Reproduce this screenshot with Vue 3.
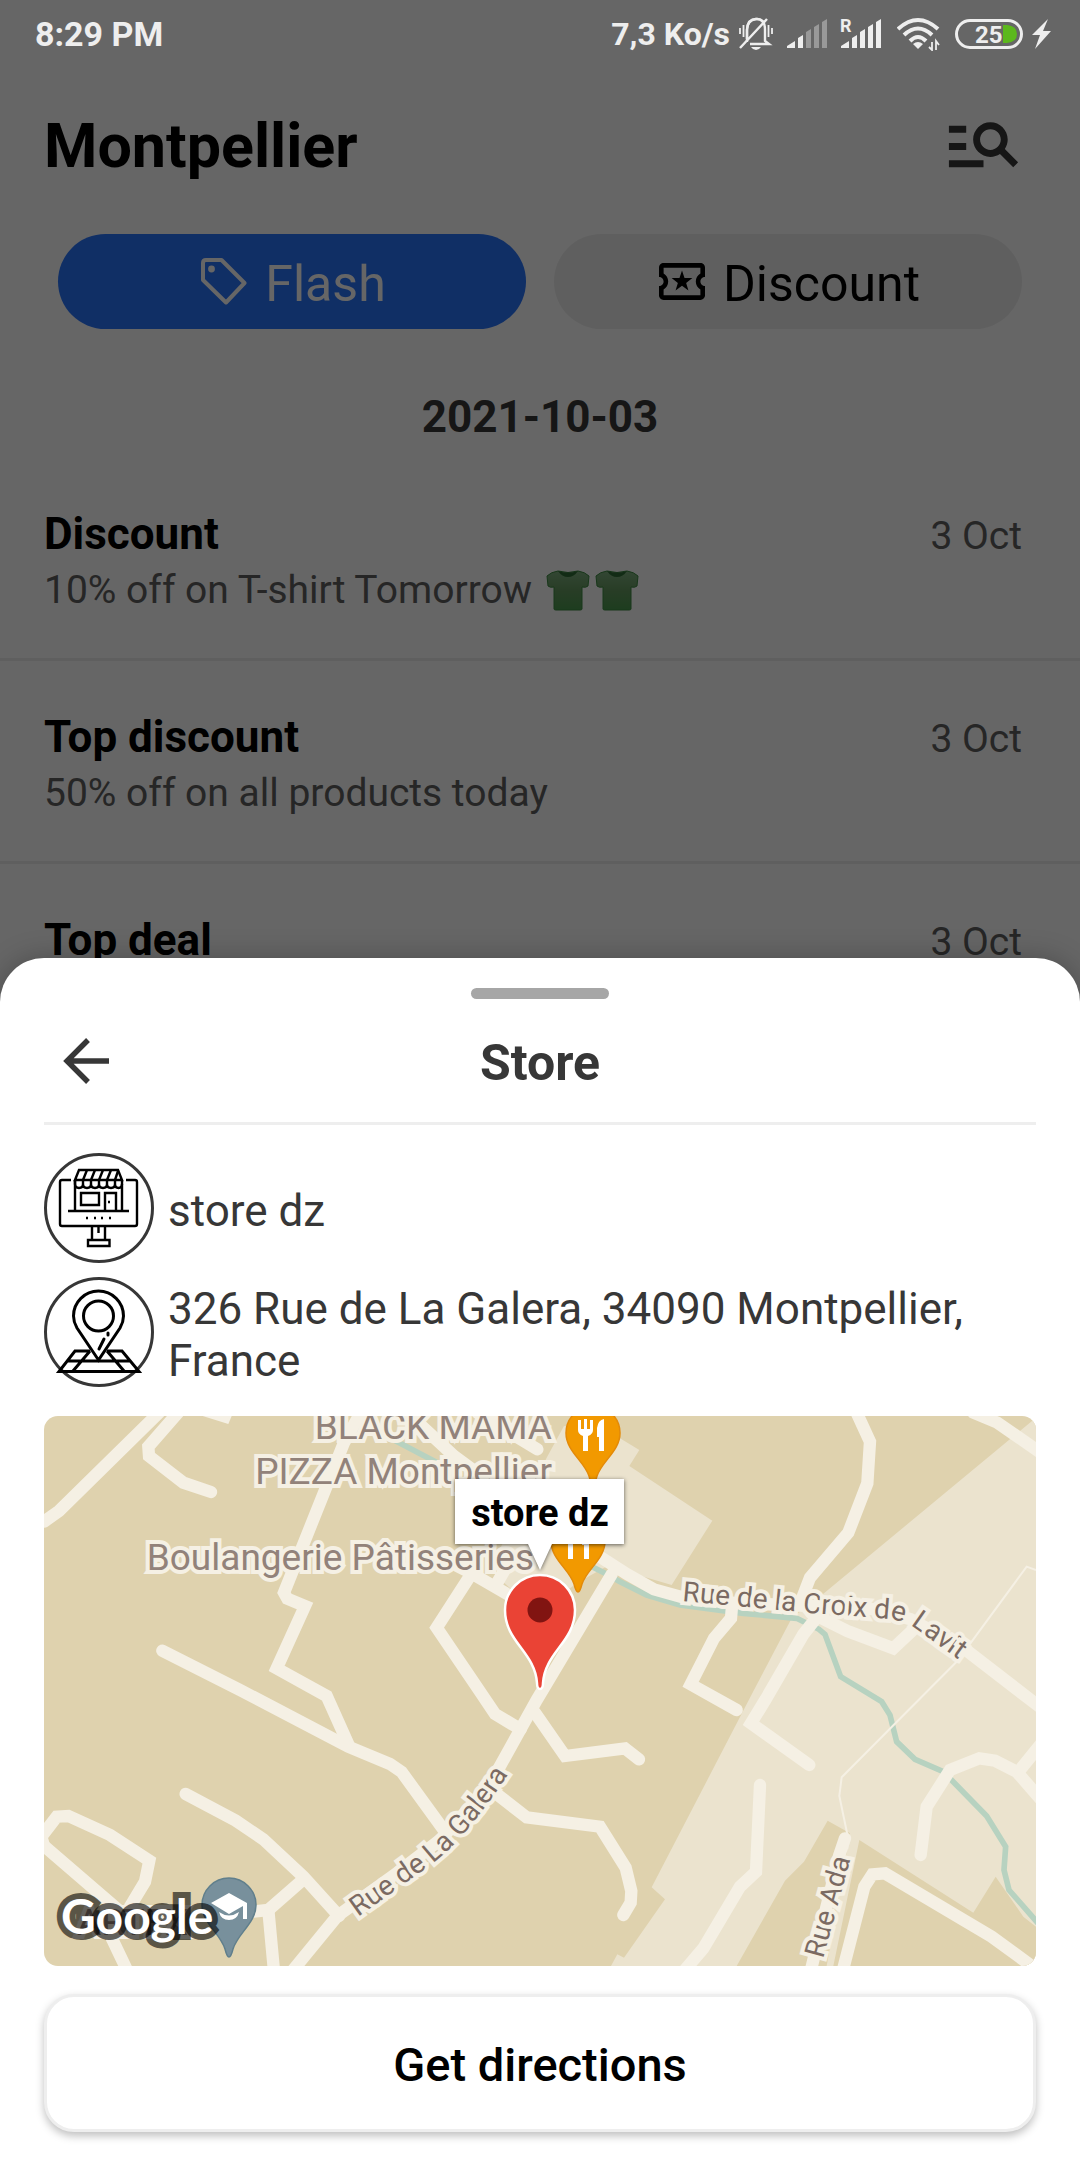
<script setup>
const offers = [
  { title: 'Discount', text: '10% off on T-shirt Tomorrow', shirts: 2, date: '3 Oct' },
  { title: 'Top discount', text: '50% off on all products today', shirts: 0, date: '3 Oct' },
  { title: 'Top deal', text: '', shirts: 0, date: '3 Oct' },
]

// Map geometry is stored at three units per pixel
const roads = [
  '0,317 45,285 345,-10',
  '415,-25 313,92 315,120 418,200 501,228',
  '950,-10 900,80 720,530 730,548 783,570 698,757 848,840 913,985',
  '355,704 588,822 913,992 1038,1044 1073,1068 1205,1250',
  '1703,475 1478,852 1360,1065 1290,1160 1190,1270 1060,1370 880,1500 745,1665',
  '1283,472 1178,635 1310,830 1353,894 1430,940',
  '1240,450 1283,472 1420,552',
  '1360,500 1400,430',
  '1473,890 1563,1020 1743,997 1785,1030',
  '1340,1120 1448,1204 1668,1232 1745,1355 1762,1425 1760,1460 1738,1497',
  '425,1134 575,1214 658,1270 778,1382 885,1500',
  '778,1390 673,1482 600,1490',
  '673,1482 690,1665',
  '-5,1285 215,1475 205,1570 255,1675',
  '0,1290 -8,1262 38,1202 73,1200 198,1257 316,1334 303,1397 258,1472',
  '2438,-10 2478,77 2470,202 2413,350 2298,485 2275,545',
  '2300,590 2410,645 2548,697 2625,625',
  '2320,602 2278,655 2165,850 2121,922 2296,1047',
  '2065,560 2061,607 2010,667 1940,805 2078,882',
  '2788,-10 2860,20 2990,110',
  '2148,1107 2136,1367 2088,1412 1978,1597 1920,1665',
  '2630,1317 2648,1172 2718,1062 2806,1027 2853,1034 2918,1067 2990,1150',
  '2928,1062 2990,985',
  '2396,1665 2461,1412 2485,1375 2523,1372 2843,1562 2970,1655',
  '2403,1267 2385,1320 2300,1665',
  '1090,-10 1230,120 1420,260 1680,430 1750,475 1830,520 1920,545 2060,560 2300,570 2500,580 2600,610 2770,705 2990,875',
  '1300,-10 1480,100',
]
</script>

<template>
  <div class="screen">
    <div class="page">
      <header class="top">
        <h1>Montpellier</h1>
        <button class="icon-button" aria-label="Search">
          <svg width="83" height="83" viewBox="0 0 24 24" fill="#373737">
            <path d="M7 8H2V6h5v2zm0 3H2v2h5v-2zm13.590 7l-3.830-3.830c-.8.52-1.740.83-2.760.83-2.760 0-5-2.240-5-5s2.240-5 5-5 5 2.240 5 5c0 1.020-.31 1.960-.83 2.750L22 16.590 20.590 18zM17 10c0-1.650-1.350-3-3-3s-3 1.350-3 3 1.350 3 3 3 3-1.350 3-3zM2 18h10v-2H2v2z" />
          </svg>
        </button>
      </header>

      <div class="tabs">
        <button class="tab active">
          <svg width="46" height="47" viewBox="0 0 46 47">
            <path d="M5 2H20.500L43.500 25 25 44.500 2 22V5Q2 2 5 2z" fill="none" stroke="currentColor" stroke-width="4" stroke-linejoin="round" />
            <circle cx="10.500" cy="11" r="3.400" fill="currentColor" />
          </svg>
          <span>Flash</span>
        </button>
        <button class="tab">
          <svg width="46" height="37" viewBox="2 4 20 16" fill="currentColor">
            <path d="M22 10V6c0-1.110-.9-2-2-2H4c-1.100 0-1.990.89-1.990 2v4c1.100 0 1.990.9 1.990 2s-.89 2-2 2v4c0 1.100.9 2 2 2h16c1.100 0 2-.9 2-2v-4c-1.100 0-2-.9-2-2s.9-2 2-2zm-2-1.460c-1.190.69-2 1.990-2 3.460s.81 2.770 2 3.460V18H4v-2.540c1.190-.69 2-1.990 2-3.460 0-1.480-.8-2.770-1.990-3.460L4 6h16v2.540z" />
            <path d="M12 7.200l1.100 3.300h3.400l-2.700 2.100 1 3.300-2.800-2-2.800 2 1-3.300-2.700-2.100h3.400z" />
          </svg>
          <span>Discount</span>
        </button>
      </div>

      <h2 class="day">2021-10-03</h2>

      <ul class="offers">
        <li v-for="offer in offers" :key="offer.title">
          <div class="offer-head">
            <h3>{{ offer.title }}</h3>
            <time>{{ offer.date }}</time>
          </div>
          <p>
            <span>{{ offer.text }}</span>
            <span v-if="offer.shirts" class="shirts">
              <svg v-for="n in offer.shirts" :key="n" width="44" height="41" viewBox="0 0 44 41" role="img" aria-label="T-shirt">
                <defs>
                  <linearGradient :id="'shirt' + n" x1="0" y1="0" x2="0" y2="1">
                    <stop offset="0" stop-color="#7fb080" />
                    <stop offset="0.500" stop-color="#64995f" />
                    <stop offset="1" stop-color="#4a9a4e" />
                  </linearGradient>
                </defs>
                <path d="M12 1Q5 2 1 6L2 16Q4 18 8 17V39Q8 40 10 40H34Q36 40 36 39V17Q40 18 42 16L43 6Q39 2 32 1Q22 4 12 1z" :fill="`url(#shirt${n})`" stroke="#3d8a42" />
                <path d="M12 1Q22 4 32 1Q28 7 22 7T12 1z" fill="#2f6d35" />
              </svg>
            </span>
          </p>
        </li>
      </ul>
    </div>

    <div class="scrim"></div>

    <div class="status">
      <span>8:29 PM</span>
      <div class="status-icons">
        <div class="pair">
          <span class="speed">7,3 Ko/s</span>
          <svg width="34" height="34" viewBox="0 0 34 34" fill="none" stroke="#eee" stroke-width="2.400">
            <path d="M8 25V13Q8 3 17 2T26 13V24L30 27H11" />
            <path d="M8 22V12Q9 2 17 2Q22 2 24 5M1 31L28 2" />
            <path d="M12 30H22Q20 33 17 33T12 30z" fill="#eee" stroke="none" />
            <path d="M1 11V17M4.500 8V20M33 11V17M29.500 8V20" stroke-width="1.800" />
          </svg>
        </div>
        <svg width="40" height="30" viewBox="0 0 40 30" fill="#eee">
          <path d="M0 29V27L8 22V29zM11 29V19L16 16V29z" />
          <path d="M19 29V13L24 10V29zM27 29V8L32 5V29zM35 29V3L40 0V29z" fill="#999" />
        </svg>
        <svg class="roaming" width="42" height="30" viewBox="0 0 42 30" fill="#eee">
          <text x="-1" y="13" font-size="18" font-weight="700">R</text>
          <path d="M0 29V27L8 22V29zM11 29V19L16 16V29zM19 29V13L24 10V29zM27 29V8L32 5V29zM35 29V3L40 0V29z" />
        </svg>
        <svg width="44" height="34" viewBox="0 0 44 34" fill="none" stroke="#eee" stroke-width="4">
          <path d="M1 12Q21-6 41 12M7 18Q21 5 35 18M13 24Q21 16 29 24" />
          <path d="M16 27Q21 23 26 27L21 32z" fill="#eee" stroke="none" />
          <path d="M35 25V33L32 30M39 33V24L42 28" stroke-width="1.800" />
        </svg>
        <div class="pair">
          <svg width="68" height="30" viewBox="0 0 68 30">
            <rect x="1.500" y="1.500" width="65" height="27" rx="13.500" fill="none" stroke="#eee" stroke-width="3" />
            <path d="M48 6H52Q62 7 62 15T52 24H48z" fill="#5cb81c" />
            <text x="20" y="24" font-size="24" font-weight="700" fill="#eee">25</text>
          </svg>
          <svg width="20" height="30" viewBox="0 0 20 30" fill="#eee">
            <path d="M16 0L0 16H8L3 30L19 12H11z" />
          </svg>
        </div>
      </div>
    </div>

    <section class="sheet" aria-label="Store">
      <div class="handle"></div>
      <header class="sheet-head">
        <button class="icon-button back" aria-label="Back">
          <svg width="48" height="48" viewBox="0 0 48 48" fill="none" stroke="#373737" stroke-width="5.400">
            <path d="M26 3L5 24L26 45M5 24H47" />
          </svg>
        </button>
        <h2>Store</h2>
      </header>

      <div class="info">
        <svg width="110" height="110" viewBox="0 0 110 110" fill="none" stroke="#000" stroke-width="2.400">
          <circle cx="55" cy="55" r="53.500" stroke="#373737" stroke-width="3" />
          <path d="M27 27H18Q16 27 16 29V71Q16 73 18 73H91Q93 73 93 71V29Q93 27 91 27H82" />
          <path d="M31 27L35 17H74L78 27zM31 27V58M78 27V58M24 58H85" />
          <path d="M39 27L43 17M47 27L51 17M55 27L59 17M63 27L67 17M71 27L74 18" />
          <path d="M31 27V31Q31 35 35 35T39 31V27M39 31Q39 35 43 35T47 31V27M47 31Q47 35 51 35T55 31V27M55 31Q55 35 59 35T63 31V27M63 31Q63 35 67 35T71 31V27M71 31Q71 35 74.500 35T78 31" />
          <path d="M37 40H55V52H37zM61 58V40H72V58M48 73V87M61 73V87M54.500 73V80M44 87H65.500V93H44z" />
          <path d="M42 65h2M50 65h2M57 65h2M65 65h2M64 49h2" />
        </svg>
        <span>store dz</span>
      </div>
      <div class="info">
        <svg width="110" height="110" viewBox="0 0 110 110" fill="none" stroke="#000" stroke-width="3">
          <circle cx="55" cy="55" r="53.500" stroke="#373737" />
          <path d="M54.500 83L33 51Q29.500 45 29.500 39A25 25 0 0 1 79.500 39Q79.500 45 76 51z" />
          <circle cx="54.500" cy="39" r="15" />
          <path d="M60 62L55 72M64 56v2" stroke-linecap="round" />
          <path d="M46 74H31L15 94.500H95L78 74H63M23 84H86M46 74L29 94M63 74L80 94" />
        </svg>
        <span>326 Rue de La Galera, 34090 Montpellier, France</span>
      </div>

      <svg class="map" viewBox="0 0 992 550" preserveAspectRatio="xMidYMid slice" role="img" aria-label="Map around store dz">
        <defs>
          <path id="croix" d="M638 185L768 197L846 203Q862 205 875 215L940 262" />
          <path id="galera" d="M314 501L388 448Q425 420 475 342" />
          <path id="ada" d="M779 543L810 430" />
          <g id="food">
            <path d="M0 51C-2 51-3 47-4 43C-9 28-27 18-27 0A27 27 0 0 1 27 0C27 18 9 28 4 43C3 47 2 51 0 51z" fill="#f29900" stroke="#e38a08" stroke-width="1.500" />
            <path d="M-15-13V-3Q-15 1-10 3V18H-5V3Q0 1 0-3V-13H-3V-4H-6V-14H-9V-4H-12V-13zM4 4V-5Q5-13 11-14V18H6V4z" fill="#fff" />
          </g>
        </defs>
        <rect width="992" height="550" fill="#dfd2ae" />
        <g transform="scale(0.33333)">
          <path d="M2976 5L2330 540L2243 607L2130 822L1823 1414L1863 1450L1740 1625L1720 1615L1701 1650H2976z" fill="#ebe3ce" />
          <path d="M1560 30L1728 67L1786 102L1756 150L2005 314L1883 507L1690 450L1600 500L1480 590L1380 500L1350 430L1460 230L1508 125z" fill="#ebe3ce" />
          <path d="M2351 1214L2418 1252L2348 1650H2078L2223 1394L2280 1337zM2446 1272L2788 1490L2855 1382L2938 1502L2976 1532V1650H2368z" fill="#dfd2ae" />
          <path d="M1050 72L1180 140M1640 450L1683 472L1728 497L1808 537L1908 567L2098 592L2258 607L2325 640L2343 655L2390 782L2513 857L2538 897L2558 977L2613 1030L2698 1067L2828 1200L2885 1292L2880 1362L2895 1422L2985 1525" fill="none" stroke="#b7d2c0" stroke-width="17" />
          <path d="M2976 462L2948 452L2740 735L2393 1084L2386 1140L2410 1255V1300" fill="none" stroke="#f5f0e4" stroke-width="6" />
          <path d="M476 0H563L553 24z" fill="#f5f0e4" />
          <polyline v-for="points in roads" :key="points" class="road" :points="points" />
        </g>

        <g class="place">
          <text x="508" y="23" text-anchor="end">BLACK MAMA</text>
          <text x="508" y="68" text-anchor="end">PIZZA Montpellier</text>
          <text x="490" y="154" text-anchor="end">Boulangerie Pâtisseries</text>
          <text x="33" y="519">ARTFX</text>
        </g>
        <g class="street">
          <text><textPath href="#croix">Rue de la Croix de Lavit</textPath></text>
          <text><textPath href="#galera">Rue de La Galera</textPath></text>
          <text><textPath href="#ada">Rue Ada</textPath></text>
        </g>

        <use href="#food" x="549" y="17" />
        <use href="#food" x="534" y="125" />

        <g transform="translate(185 489)">
          <path d="M0 52C-2 52-3 48-4 44C-9 28-27 18-27 0A27 27 0 0 1 27 0C27 18 9 28 4 44C3 48 2 52 0 52z" fill="#78909c" stroke="#607f8c" stroke-width="1.500" />
          <path d="M-18-2L0-12L18-2V14H14V1L0 9zM-10 7Q0 14 10 7Q8 15 0 15T-10 7z" fill="#fff" />
        </g>
        <text class="brand" x="17" y="518">Google</text>

        <g transform="translate(496 194)">
          <path d="M0 79C-3 79-3 76-3 73C-5 42-35 32-35 0A35 35 0 0 1 35 0C35 32 5 42 3 73C3 76 3 79 0 79z" fill="#ea4335" stroke="#fff" stroke-width="2.500" />
          <circle r="12.500" fill="#811411" />
        </g>
        <path class="bubble" d="M411 63H580V128H508L496 154L484 128H411z" />
        <text class="bubble-text" x="496" y="110" text-anchor="middle">store dz</text>
      </svg>

      <button class="directions">Get directions</button>
    </section>
  </div>
</template>

<style>
body {
  margin: 0;
}
</style>

<style scoped>
.screen {
  position: relative;
  min-height: 100vh;
  overflow: hidden;
  background: #fff;
  color: #000;
  font-family: Roboto, "Liberation Sans", sans-serif;
}
h1, h2, h3, p, ul {
  margin: 0;
  padding: 0;
}
svg {
  display: block;
  flex: none;
}
button {
  font-family: inherit;
  cursor: pointer;
}
.icon-button {
  padding: 0;
  border: 0;
  background: none;
}
.page {
  padding-top: 68px;
}
.top {
  display: flex;
  align-items: center;
  justify-content: space-between;
  height: 72px;
  padding: 42px 55px 52px 44px;
}
h1 {
  font-size: 61px;
  line-height: 72px;
}
.tabs {
  display: flex;
  gap: 28px;
  padding: 0 58px;
}
.tab {
  flex: 1;
  display: flex;
  align-items: center;
  justify-content: center;
  gap: 18px;
  height: 95px;
  padding: 0 0 0 3px;
  border: 0;
  border-radius: 48px;
  background: #eee;
  color: #000;
  font-size: 50px;
}
.tab span {
  padding-top: 4px;
}
.tab.active {
  background: #2a75fd;
  color: #fff;
}
.day {
  margin: 62px 0 15px;
  color: #373737;
  font-size: 44px;
  line-height: 52px;
  text-align: center;
}
.offers {
  list-style: none;
}
.offers li {
  padding: 50px 58px 45px 44px;
  border-bottom: 3px solid #eee;
}
.offer-head {
  display: flex;
  align-items: baseline;
  justify-content: space-between;
}
h3 {
  font-size: 44px;
  line-height: 52px;
}
time, .offers p {
  color: #606060;
  font-size: 39px;
  line-height: 46px;
}
.offers p {
  display: flex;
  align-items: center;
  gap: 14px;
  margin-top: 7px;
}
.shirts {
  display: flex;
  gap: 5px;
}
.scrim {
  position: absolute;
  inset: 0;
  background: rgba(0, 0, 0, 0.6);
}
.status {
  position: absolute;
  top: 0;
  left: 0;
  right: 0;
  display: flex;
  align-items: center;
  justify-content: space-between;
  height: 68px;
  padding: 0 28px 0 35px;
  color: #eee;
  font-size: 34px;
  font-weight: 700;
}
.speed {
  font-size: 32px;
}
.roaming {
  overflow: visible;
}
.status-icons {
  display: flex;
  align-items: center;
  gap: 14px;
}
.pair {
  display: flex;
  align-items: center;
  gap: 9px;
}
.sheet {
  position: absolute;
  left: 0;
  right: 0;
  bottom: 0;
  display: flex;
  flex-direction: column;
  padding: 30px 44px 28px;
  border-radius: 44px 44px 0 0;
  background: #fff;
  box-shadow: 0 0 28px rgba(0, 0, 0, 0.25);
  color: #373737;
}
.handle {
  align-self: center;
  width: 138px;
  height: 11px;
  border-radius: 6px;
  background: #a6a6a6;
}
.sheet-head {
  display: grid;
  grid-template-columns: 1fr auto 1fr;
  align-items: center;
  height: 123px;
  margin-bottom: 28px;
  border-bottom: 3px solid #eee;
}
.back {
  justify-self: start;
  padding-left: 18px;
}
.sheet-head h2 {
  padding-top: 4px;
  font-size: 50px;
  line-height: 58px;
}
.info {
  display: flex;
  align-items: center;
  gap: 14px;
  margin-bottom: 14px;
  font-size: 44px;
  line-height: 52px;
}
.info span {
  padding-top: 5px;
}
.map {
  width: 100%;
  height: 550px;
  margin: 15px 0 28px;
  border-radius: 14px;
}
.road {
  fill: none;
  stroke: #f5f0e4;
  stroke-width: 37;
  stroke-linecap: round;
}
.place, .street {
  paint-order: stroke;
  stroke: #f5f0e4;
  stroke-width: 8px;
}
.place {
  fill: #92827a;
  font-size: 37px;
}
.street {
  fill: #7b6a62;
  font-size: 28px;
}
.brand {
  fill: #fff;
  stroke: rgba(0, 0, 0, 0.6);
  stroke-width: 12px;
  paint-order: stroke;
  font-family: Lato, sans-serif;
  font-size: 48px;
  font-weight: 700;
}
.bubble {
  fill: #fff;
  filter: drop-shadow(0 1px 2px rgba(0, 0, 0, 0.6));
}
.bubble-text {
  fill: #000;
  font-size: 38px;
  font-weight: 700;
}
.directions {
  height: 138px;
  padding: 2px 0 0;
  border: 3px solid #eee;
  border-radius: 30px;
  background: #fff;
  box-shadow: 0 4px 8px rgba(0, 0, 0, 0.25);
  color: #000;
  font-size: 47px;
  font-weight: 500;
}
</style>
